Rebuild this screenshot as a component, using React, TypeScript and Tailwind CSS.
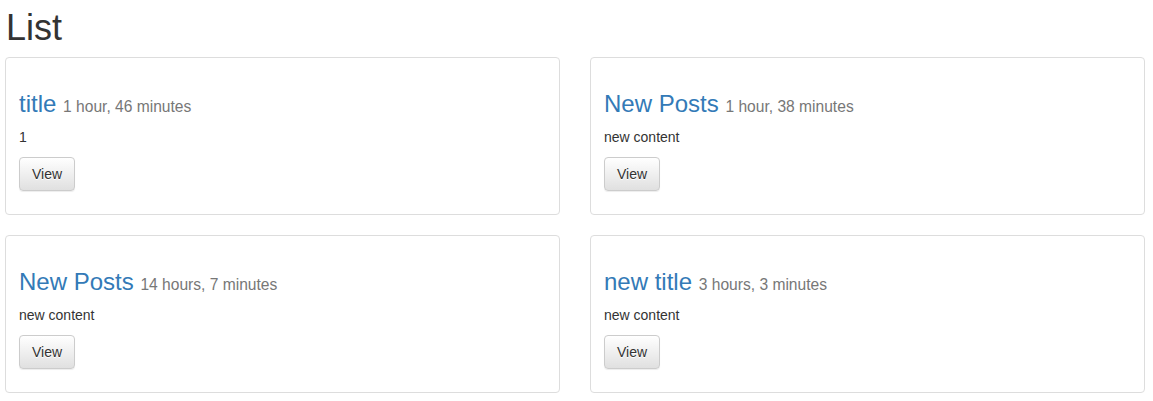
const posts = [
  { title: "title", ago: "1 hour, 46 minutes", body: "1" },
  { title: "New Posts", ago: "1 hour, 38 minutes", body: "new content" },
  { title: "New Posts", ago: "14 hours, 7 minutes", body: "new content" },
  { title: "new title", ago: "3 hours, 3 minutes", body: "new content" },
];

const App = () => {
  return (
    <div
      className="min-h-screen bg-white pl-[5px] text-[14px] leading-[20px] text-[#333]"
      style={{ fontFamily: '"Liberation Sans", Arial, sans-serif' }}
    >
      <h1 className="mt-[8px] mb-[9px] pl-[1px] text-[36px] leading-[1.1] font-normal text-[#333]">
        List
      </h1>
      <div className="grid grid-cols-[555px_555px] gap-x-[30px]">
        {posts.map((post, i) => (
          <div
            key={i}
            className="mb-[20px] rounded-[4px] border border-[#ddd] bg-white p-[4px]"
          >
            <div className="p-[9px]">
              <h3 className="mt-[20px] mb-[10px] text-[24px] leading-[1.1] font-normal text-[#337ab7]">
                {post.title}{" "}
                <small className="text-[15.6px] text-[#777]">{post.ago}</small>
              </h3>
              <p className="mb-[10px]">{post.body}</p>
              <p className="mb-[10px]">
                <button
                  className="rounded-[4px] border border-[#ccc] bg-gradient-to-b from-white to-[#e0e0e0] px-[12px] py-[6px] text-[14px] leading-[20px] text-[#333] shadow-[inset_0_1px_0_rgba(255,255,255,.15),0_1px_1px_rgba(0,0,0,.075)] [text-shadow:0_1px_0_#fff]"
                  type="button"
                >
                  View
                </button>
              </p>
            </div>
          </div>
        ))}
      </div>
    </div>
  );
};

export default App;
